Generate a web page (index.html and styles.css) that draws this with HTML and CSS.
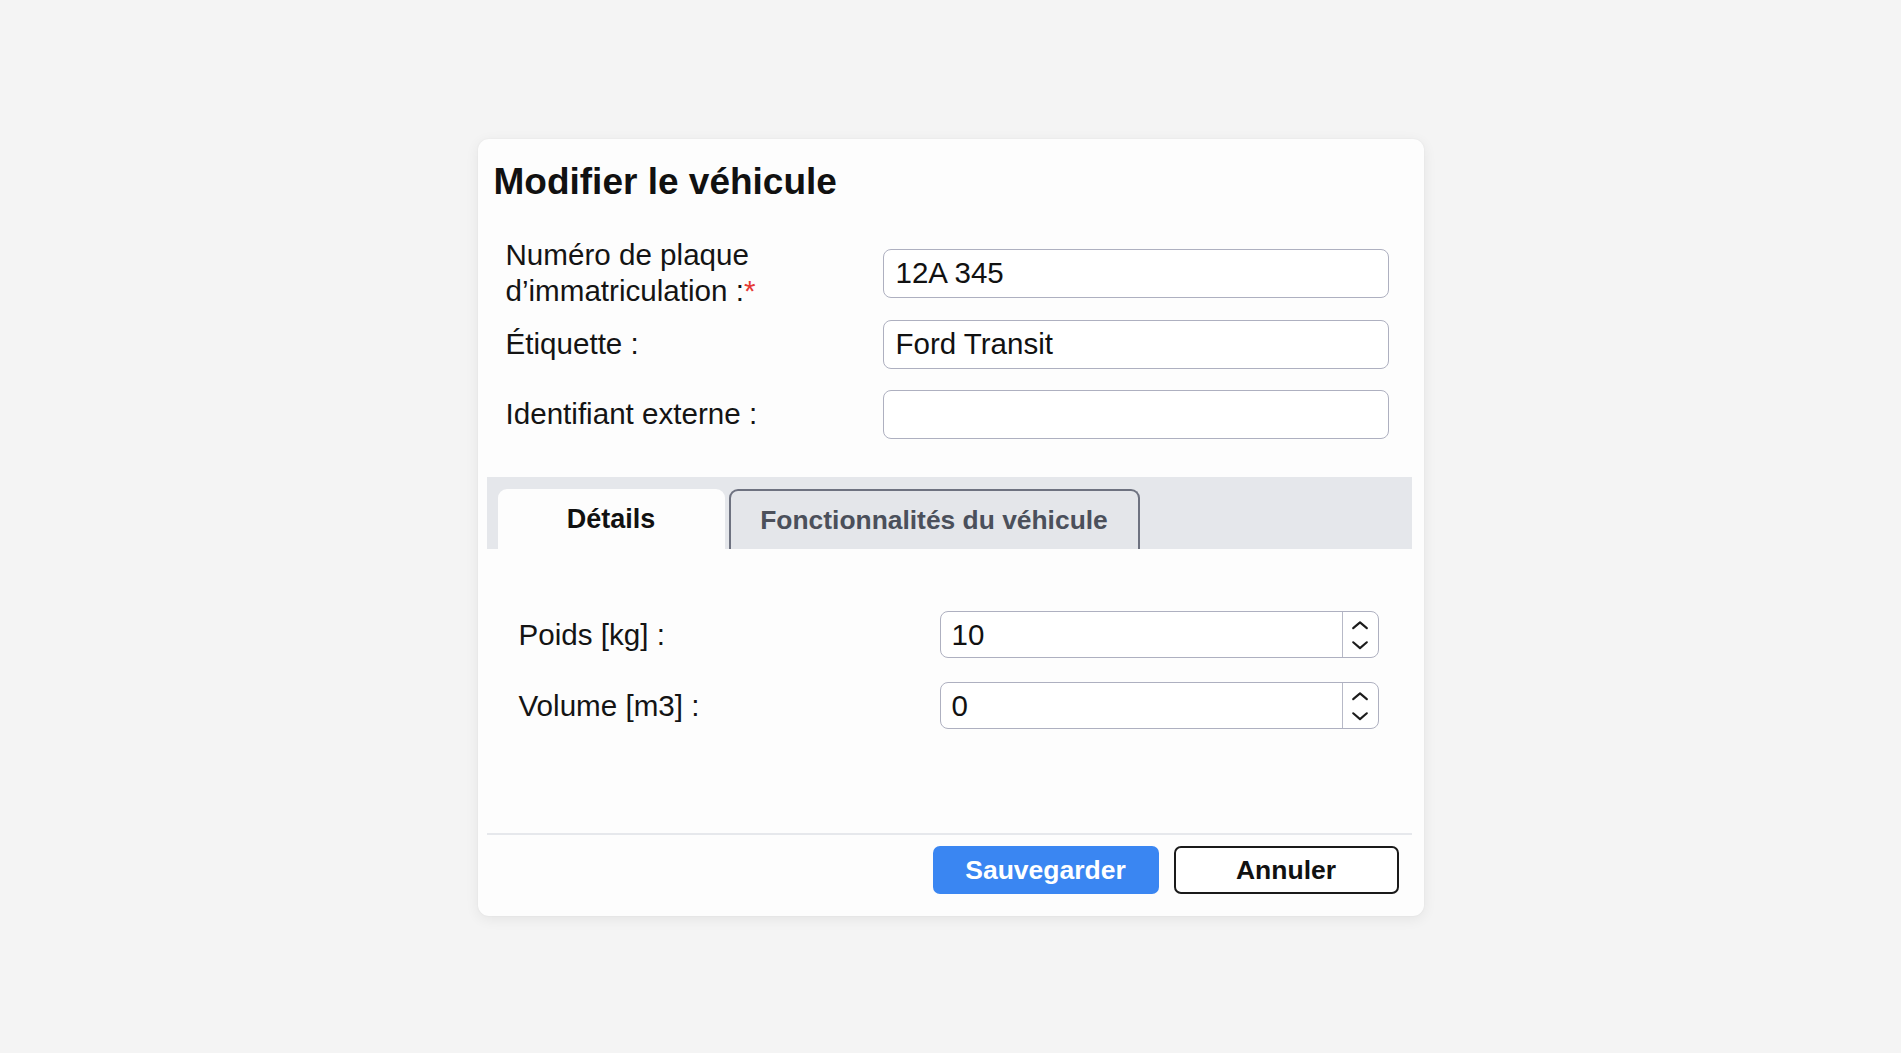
FILE: index.html
```html
<!DOCTYPE html>
<html lang="fr">
<head>
<meta charset="utf-8">
<title>Modifier le véhicule</title>
<link rel="stylesheet" href="styles.css">
</head>
<body>
<div class="dialog">
  <h1 class="title">Modifier le véhicule</h1>
  <div class="form">
    <div class="row">
      <label class="label">Numéro de plaque<br>d’immatriculation :<span class="req">*</span></label>
      <input class="field" type="text" value="12A 345">
    </div>
    <div class="row">
      <label class="label">Étiquette :</label>
      <input class="field" type="text" value="Ford Transit">
    </div>
    <div class="row">
      <label class="label">Identifiant externe :</label>
      <input class="field" type="text" value="">
    </div>
  </div>

  <div class="tabbar">
    <div class="tab tab-active">Détails</div>
    <div class="tab tab-inactive">Fonctionnalités du véhicule</div>
  </div>

  <div class="panel">
    <div class="prow">
      <label class="label">Poids [kg] :</label>
      <div class="numfield">
        <input class="numinput" type="text" value="10">
        <div class="spinner">
          <svg width="36" height="43" viewBox="0 0 36 43"><path d="M10.5 15 L17.5 9 L24.5 15" fill="none" stroke="#1c1c1c" stroke-width="2.2" stroke-linecap="round" stroke-linejoin="round"/><path d="M10.5 29.5 L17.5 35.5 L24.5 29.5" fill="none" stroke="#1c1c1c" stroke-width="2.2" stroke-linecap="round" stroke-linejoin="round"/></svg>
        </div>
      </div>
    </div>
    <div class="prow">
      <label class="label">Volume [m3] :</label>
      <div class="numfield">
        <input class="numinput" type="text" value="0">
        <div class="spinner">
          <svg width="36" height="43" viewBox="0 0 36 43"><path d="M10.5 15 L17.5 9 L24.5 15" fill="none" stroke="#1c1c1c" stroke-width="2.2" stroke-linecap="round" stroke-linejoin="round"/><path d="M10.5 29.5 L17.5 35.5 L24.5 29.5" fill="none" stroke="#1c1c1c" stroke-width="2.2" stroke-linecap="round" stroke-linejoin="round"/></svg>
        </div>
      </div>
    </div>
  </div>

  <div class="separator"></div>

  <div class="footer">
    <button class="btn btn-primary" type="button">Sauvegarder</button>
    <button class="btn btn-secondary" type="button">Annuler</button>
  </div>
</div>
</body>
</html>
```

FILE: styles.css
```css
* { box-sizing: border-box; }

html, body {
  margin: 0;
  padding: 0;
}

body {
  height: 100vh;
  background: #f4f4f4;
  font-family: "Liberation Sans", Arial, Helvetica, sans-serif;
  color: #111;
  display: flex;
  align-items: center;
  justify-content: center;
}

.dialog {
  width: 946px;
  margin-top: 2px;
  background: #fdfdfd;
  border-radius: 11px;
  box-shadow: 0 3px 14px rgba(0, 0, 0, 0.07), 0 0 2px rgba(0, 0, 0, 0.06);
  padding: 22px 12px 22px 9px;
  display: flex;
  flex-direction: column;
}

.title {
  margin: 0;
  padding-left: 7px;
  font-size: 37px;
  line-height: 42px;
  font-weight: 700;
  color: #111;
}

.form {
  margin: 34px 23px 0 19px;
}

.row {
  display: grid;
  grid-template-columns: 377px 1fr;
  align-items: center;
  min-height: 70px;
}

.label {
  font-size: 29.6px;
  line-height: 36px;
  color: #141414;
}

.req {
  color: #e53935;
}

.field {
  height: 49px;
  width: 100%;
  border: 1.5px solid #aeb0c0;
  border-radius: 8px;
  background: #fff;
  padding: 0 12px;
  font-family: "Liberation Sans", Arial, Helvetica, sans-serif;
  font-size: 29.5px;
  color: #111;
  outline: none;
}

.tabbar {
  margin-top: 28px;
  height: 72px;
  background: #e5e7eb;
  padding: 12px 0 0 11px;
  display: flex;
  align-items: flex-end;
  gap: 4px;
}

.tab {
  height: 60px;
  display: flex;
  align-items: center;
  justify-content: center;
  font-size: 27px;
  font-weight: 700;
  border-radius: 9px 9px 0 0;
}

.tab-active {
  width: 227px;
  background: #fdfdfd;
  color: #111;
}

.tab-inactive {
  width: 411px;
  background: #e4e6ea;
  border: 2px solid #6e7280;
  border-bottom: none;
  color: #4b505b;
  font-size: 26.4px;
}

.panel {
  height: 284px;
  padding: 50px 33px 0 32px;
  background: #fdfdfd;
}

.prow {
  display: grid;
  grid-template-columns: 421px 1fr;
  align-items: center;
  min-height: 71px;
}

.numfield {
  height: 47px;
  display: flex;
  border: 1.5px solid #aeb0c0;
  border-radius: 8px;
  background: #fff;
  overflow: hidden;
}

.numinput {
  flex: 1;
  min-width: 0;
  border: none;
  outline: none;
  background: transparent;
  padding: 0 11px;
  font-family: "Liberation Sans", Arial, Helvetica, sans-serif;
  font-size: 29.5px;
  color: #111;
}

.spinner {
  width: 36px;
  border-left: 1.5px solid #b7b9c7;
  display: flex;
  align-items: center;
  justify-content: center;
}

.spinner svg {
  display: block;
}

.separator {
  height: 2px;
  background: #e6e8ec;
}

.footer {
  margin-top: 11px;
  display: flex;
  justify-content: flex-end;
  gap: 15px;
  padding-right: 13px;
}

.btn {
  height: 48px;
  width: 226px;
  border-radius: 7px;
  font-family: "Liberation Sans", Arial, Helvetica, sans-serif;
  font-size: 26.5px;
  font-weight: 700;
  cursor: pointer;
}

.btn-primary {
  background: #3a86f2;
  border: none;
  color: #fff;
}

.btn-secondary {
  width: 225px;
  background: #fff;
  border: 2px solid #1a1a1a;
  color: #111;
}
```
